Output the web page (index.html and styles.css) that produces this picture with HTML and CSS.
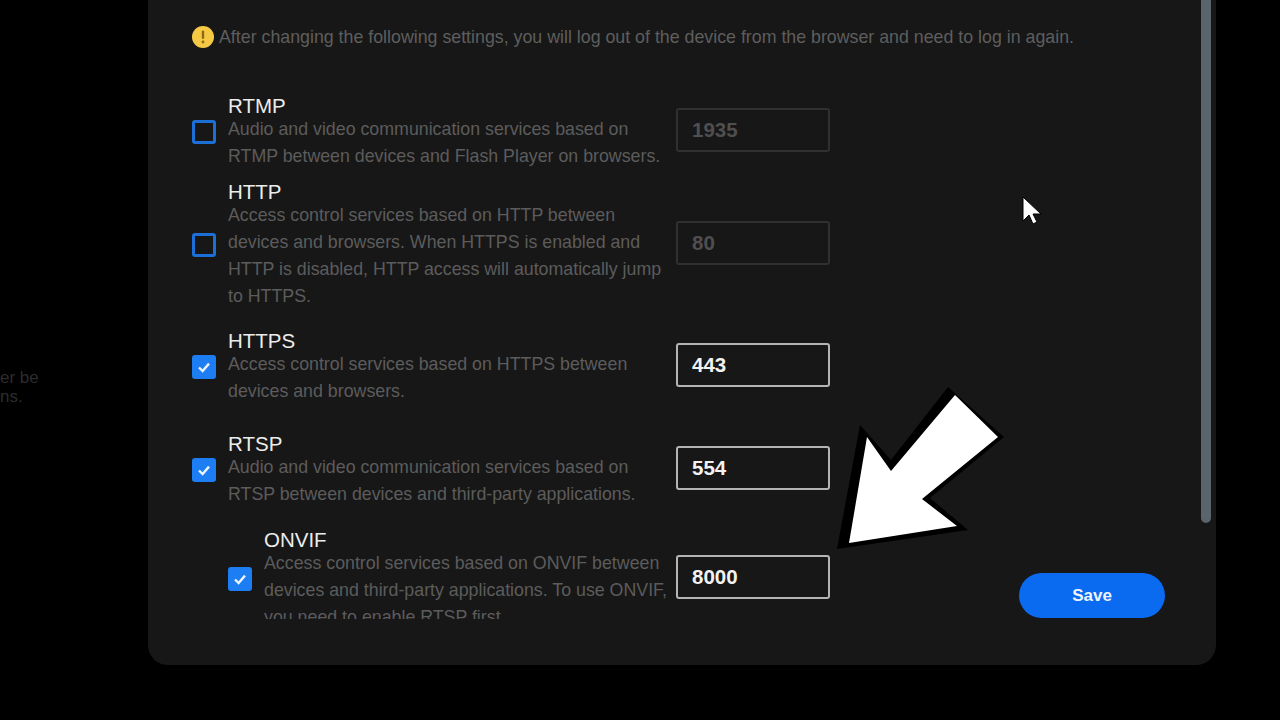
FILE: index.html
```html
<!DOCTYPE html>
<html lang="en">
<head>
  <meta charset="utf-8">
  <meta name="viewport" content="width=device-width, initial-scale=1.0">
  <title>Service settings</title>
  <link rel="stylesheet" href="styles.css">
</head>
<body>
  <aside class="side">
    <p>er be<br>ns.</p>
  </aside>

  <main class="panel">
    <div class="notice">
      <svg class="notice-icon" viewBox="0 0 22 22" aria-hidden="true">
        <circle cx="11" cy="11" r="11" fill="#f6c945"/>
        <rect x="9.8" y="4.5" width="2.4" height="8.5" rx="1.2" fill="#8a6a14"/>
        <circle cx="11" cy="16" r="1.4" fill="#8a6a14"/>
      </svg>
      <span>After changing the following settings, you will log out of the device from the browser and need to log in again.</span>
    </div>

    <div class="content">
      <div class="list">
        <div class="row">
          <span class="box"></span>
          <div class="text">
            <h3>RTMP</h3>
            <p>Audio and video communication services based on RTMP between devices and Flash Player on browsers.</p>
          </div>
          <input class="port" type="text" value="1935" disabled>
        </div>

        <div class="row row-http">
          <span class="box"></span>
          <div class="text">
            <h3>HTTP</h3>
            <p>Access control services based on HTTP between devices and browsers. When HTTPS is enabled and HTTP is disabled, HTTP access will automatically jump to HTTPS.</p>
          </div>
          <input class="port" type="text" value="80" disabled>
        </div>

        <div class="row row-https">
          <span class="box box-on">
            <svg viewBox="0 0 24 24" aria-hidden="true"><path d="M7 12.5l3.6 3.6L17 8.6"/></svg>
          </span>
          <div class="text">
            <h3>HTTPS</h3>
            <p>Access control services based on HTTPS between devices and browsers.</p>
          </div>
          <input class="port" type="text" value="443">
        </div>

        <div class="row row-rtsp">
          <span class="box box-on">
            <svg viewBox="0 0 24 24" aria-hidden="true"><path d="M7 12.5l3.6 3.6L17 8.6"/></svg>
          </span>
          <div class="text">
            <h3>RTSP</h3>
            <p>Audio and video communication services based on RTSP between devices and third-party applications.</p>
          </div>
          <input class="port" type="text" value="554">
        </div>

        <div class="row row-onvif">
          <span class="box box-on">
            <svg viewBox="0 0 24 24" aria-hidden="true"><path d="M7 12.5l3.6 3.6L17 8.6"/></svg>
          </span>
          <div class="text">
            <h3>ONVIF</h3>
            <p>Access control services based on ONVIF between devices and third-party applications. To use ONVIF, you need to enable RTSP first.</p>
          </div>
          <input class="port" type="text" value="8000">
        </div>
      </div>

      <button class="save">Save</button>
    </div>

    <div class="scrollbar"></div>
  </main>

  <!-- annotation drawn over the video -->
  <svg class="arrow" viewBox="0 0 180 170" aria-hidden="true">
    <polygon points="7,169 30,45 61,80 118,7 174,57 100,118 138,150" fill="#000"/>
    <polygon points="19,163 37,57 61,91 125,15 168,57 92,119 127,146" fill="#fff"/>
  </svg>

  <svg class="cursor" viewBox="0 0 20 30" aria-hidden="true">
    <path d="M2 1v24l6-6 4 9 4-2-4-8h8z" fill="#fff" stroke="#000" stroke-width="1"/>
  </svg>
</body>
</html>
```

FILE: styles.css
```css
body {
  margin: 0;
  height: 720px;
  overflow: hidden;
  display: flex;
  align-items: flex-start;
  background-color: #000;
  font-family: "Liberation Sans", Arial, sans-serif;
}

.side {
  width: 148px;
  flex-shrink: 0;
  padding-top: 368px;
  color: #2c2c2c;
  font-size: 17px;
  line-height: 19px;
}

.side p {
  margin: 0;
}

.panel {
  position: relative;
  width: 1068px;
  height: 665px;
  box-sizing: border-box;
  padding: 24px 0 0 44px;
  background-color: #171717;
  border-radius: 0 0 20px 20px;
}

.notice {
  display: flex;
  align-items: center;
  gap: 5px;
  height: 26px;
  margin-bottom: 40px;
  color: #5e5e5e;
  font-size: 17.8px;
}

.notice-icon {
  width: 22px;
  height: 22px;
  flex-shrink: 0;
}

.content {
  display: flex;
  align-items: flex-end;
  gap: 189px;
}

.list {
  width: 638px;
  height: 529px;
  box-sizing: border-box;
  padding-top: 6px;
  overflow: hidden;
}

.row {
  display: flex;
  align-items: center;
}

.row-http {
  margin-top: 12px;
}

.row-https {
  margin-top: 21px;
}

.row-rtsp {
  margin-top: 29px;
}

.row-onvif {
  margin-top: 22px;
  padding-left: 36px;
}

.box {
  width: 24px;
  height: 24px;
  box-sizing: border-box;
  flex-shrink: 0;
  margin-right: 12px;
  margin-bottom: 3px;
  border: 3px solid #1b6fd6;
  border-radius: 3px;
}

.box-on {
  border: none;
  background-color: #1c7ef2;
}

.box-on svg {
  display: block;
  fill: none;
  stroke: #eaf3ff;
  stroke-width: 2.4;
}

.text {
  flex: 1;
  margin-right: 8px;
}

.text h3 {
  margin: 0 0 1px;
  color: #ececec;
  font-size: 20.5px;
  font-weight: normal;
  line-height: 19px;
}

.text p {
  margin: 0;
  color: #5c5c5c;
  font-size: 17.8px;
  line-height: 27px;
}

.port {
  width: 154px;
  height: 44px;
  box-sizing: border-box;
  flex-shrink: 0;
  margin-bottom: 7px;
  padding: 0 14px;
  background: transparent;
  border: 2px solid #b4b4b4;
  border-radius: 3px;
  color: #f2f2f2;
  font-family: inherit;
  font-size: 20.5px;
  font-weight: bold;
}

.port:disabled {
  border-color: #303030;
  color: #4f4f4f;
}

.save {
  width: 146px;
  height: 45px;
  flex-shrink: 0;
  margin-bottom: 1px;
  background-color: #0a6af0;
  border: none;
  border-radius: 23px;
  color: #eef4ff;
  font-family: inherit;
  font-size: 17px;
  font-weight: bold;
}

.scrollbar {
  position: absolute;
  top: 0;
  left: 1053px;
  width: 10px;
  height: 523px;
  background-color: #5a646c;
  border-radius: 0 0 5px 5px;
}

.arrow {
  position: absolute;
  left: 830px;
  top: 380px;
  width: 180px;
  height: 170px;
}

.cursor {
  position: absolute;
  left: 1021px;
  top: 196px;
  width: 20px;
  height: 30px;
}
```
